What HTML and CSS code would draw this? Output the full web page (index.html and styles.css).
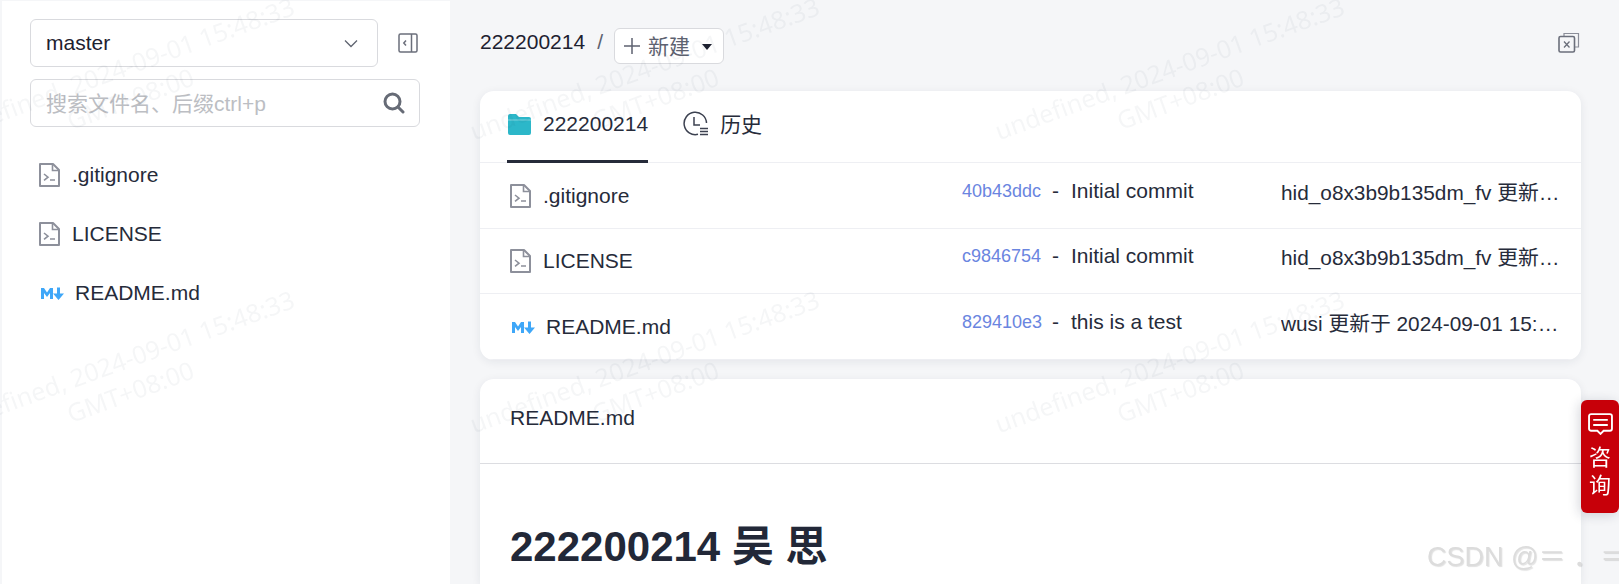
FILE: index.html
```html
<!DOCTYPE html>
<html lang="zh-CN">
<head>
<meta charset="utf-8">
<title>222200214</title>
<link rel="stylesheet" href="styles.css">
</head>
<body>
<svg class="defs" width="0" height="0" aria-hidden="true">
  <symbol id="i-file" viewBox="0 0 21 24">
    <path d="M1 1h13l6 6v16H1z" fill="none" stroke="#8d909b" stroke-width="2" stroke-linejoin="round"/>
    <path d="M13.500 1v6.500H20" fill="none" stroke="#8d909b" stroke-width="1.600"/>
    <path d="M5 11l4 3.200L5 17.400M11 17h5" fill="none" stroke="#8d909b" stroke-width="1.600"/>
  </symbol>
  <symbol id="i-md" viewBox="0 0 24 14">
    <path d="M1 13V2h3l3 4.500L10 2h3v11h-3V7L7 11 4 7v6z" fill="#3fa7f8"/>
    <path d="M17 1.500h3v6h4l-5.500 6.500L13 7.500h4z" fill="#3fa7f8"/>
  </symbol>
</svg>
<div class="app">
  <aside class="sidebar">
    <div class="branch-row">
      <div class="select">
        <span>master</span>
        <svg class="chev" width="14" height="9" viewBox="0 0 14 9"><path d="M1 1.500l6 6 6-6" fill="none" stroke="#5f6470" stroke-width="1.300"/></svg>
      </div>
      <svg class="collapse" width="20" height="20" viewBox="0 0 20 20">
        <rect x="1" y="1" width="18" height="18" rx="1.500" fill="none" stroke="#6b6f7b" stroke-width="1.500"/>
        <path d="M13.500 1v18" stroke="#6b6f7b" stroke-width="1.500"/>
        <path d="M8 7.500L5.800 10 8 12.500" fill="none" stroke="#6b6f7b" stroke-width="1.500"/>
      </svg>
    </div>
    <div class="search">
      <span class="placeholder">搜索文件名、后缀ctrl+p</span>
      <svg width="22" height="22" viewBox="0 0 22 22"><circle cx="9.500" cy="9.500" r="7.500" fill="none" stroke="#666b76" stroke-width="3"/><path d="M15 15l5 5" stroke="#666b76" stroke-width="3" stroke-linecap="round"/></svg>
    </div>
    <ul class="tree">
      <li class="tree-item"><svg class="file-icon"><use href="#i-file"/></svg><span>.gitignore</span></li>
      <li class="tree-item"><svg class="file-icon"><use href="#i-file"/></svg><span>LICENSE</span></li>
      <li class="tree-item"><svg class="md-icon"><use href="#i-md"/></svg><span>README.md</span></li>
    </ul>
  </aside>
  <main class="main">
    <div class="toolbar">
      <span class="crumb">222200214</span>
      <span class="slash">/</span>
      <div class="new-btn">
        <svg width="16" height="16" viewBox="0 0 16 16"><path d="M8 0v16M0 8h16" stroke="#5d6270" stroke-width="1.500"/></svg>
        <span>新建</span>
        <i class="caret"></i>
      </div>
      <svg class="copy" width="22" height="21" viewBox="0 0 22 21">
        <path d="M6 4V1.500h14.500V15H17" fill="none" stroke="#8b8e99" stroke-width="1.200"/>
        <rect x="1" y="4.500" width="15.500" height="15.500" rx="1.500" fill="none" stroke="#6b6f7b" stroke-width="1.600"/>
        <path d="M6 9.500l5.500 6M11.500 9.500l-5.500 6" stroke="#6b6f7b" stroke-width="1.300"/>
      </svg>
    </div>
    <section class="card files">
      <div class="tabs">
        <div class="tab active">
          <svg class="folder" width="23" height="21" viewBox="0 0 23 21"><path d="M0 2a2 2 0 0 1 2-2h6l3 3h10a2 2 0 0 1 2 2v14a2 2 0 0 1-2 2H2a2 2 0 0 1-2-2z" fill="#2cb7c9"/><path d="M0 6h23" stroke="#7fd3de" stroke-width="1"/></svg>
          <span>222200214</span>
        </div>
        <div class="tab">
          <svg width="25" height="25" viewBox="0 0 25 25">
            <path d="M15 23.300A11.200 11.200 0 1 1 23.500 12" fill="none" stroke="#3c4150" stroke-width="1.500"/>
            <path d="M11 6v8h6" fill="none" stroke="#3c4150" stroke-width="1.500"/>
            <path d="M17 17.500h8M17 20.500h8M17 23.500h8" stroke="#3c4150" stroke-width="1.500"/>
          </svg>
          <span class="tab-cjk">历史</span>
        </div>
      </div>
      <div class="row">
        <div class="name"><svg class="file-icon"><use href="#i-file"/></svg><span>.gitignore</span></div>
        <div class="commit"><a class="hash">40b43ddc</a><span class="dash">-</span><span>Initial commit</span></div>
        <div class="author">hid_o8x3b9b135dm_fv 更新于 2024-09-01 15:30</div>
      </div>
      <div class="row">
        <div class="name"><svg class="file-icon"><use href="#i-file"/></svg><span>LICENSE</span></div>
        <div class="commit"><a class="hash">c9846754</a><span class="dash">-</span><span>Initial commit</span></div>
        <div class="author">hid_o8x3b9b135dm_fv 更新于 2024-09-01 15:30</div>
      </div>
      <div class="row">
        <div class="name"><svg class="md-icon"><use href="#i-md"/></svg><span>README.md</span></div>
        <div class="commit"><a class="hash">829410e3</a><span class="dash">-</span><span>this is a test</span></div>
        <div class="author">wusi 更新于 2024-09-01 15:35:20</div>
      </div>
    </section>
    <section class="card readme">
      <div class="readme-head">README.md</div>
      <h1 class="title">222200214 吴 思</h1>
    </section>
  </main>
</div>
<div class="consult">
  <svg width="25" height="22" viewBox="0 0 24 21">
    <path d="M3 1h18a2 2 0 0 1 2 2v12a2 2 0 0 1-2 2h-6l-3 3-3-3H3a2 2 0 0 1-2-2V3a2 2 0 0 1 2-2z" fill="none" stroke="#fff" stroke-width="1.800"/>
    <path d="M5 6.500h14M5 11.500h14" stroke="#fff" stroke-width="1.800"/>
  </svg>
  <span>咨</span>
  <span>询</span>
</div>
<div class="csdn">CSDN @＝ ．＝</div>
<div class="watermarks" aria-hidden="true">
  <div class="wm"><span>undefined, 2024-09-01 15:48:33</span><span>GMT+08:00</span></div>
  <div class="wm"><span>undefined, 2024-09-01 15:48:33</span><span>GMT+08:00</span></div>
  <div class="wm"><span>undefined, 2024-09-01 15:48:33</span><span>GMT+08:00</span></div>
  <div class="wm"><span>undefined, 2024-09-01 15:48:33</span><span>GMT+08:00</span></div>
  <div class="wm"><span>undefined, 2024-09-01 15:48:33</span><span>GMT+08:00</span></div>
  <div class="wm"><span>undefined, 2024-09-01 15:48:33</span><span>GMT+08:00</span></div>
</div>
</body>
</html>
```
FILE: styles.css
```css
* { box-sizing: border-box; }
html, body { margin: 0; height: 100%; }
html { overflow: hidden; }
body {
  overflow: hidden;
  background: #f5f6f8;
  color: #262b3a;
  font-family: "Liberation Sans", "Noto Sans CJK SC", sans-serif;
  font-size: 21px;
  position: relative;
}
.defs { position: absolute; }
.app { display: flex; height: 100%; padding-top: 1px; padding-left: 2px; }

.sidebar {
  width: 448px;
  flex: none;
  background: #fff;
  padding: 18px 30px 0 28px;
}
.branch-row { display: flex; align-items: center; justify-content: space-between; }
.select {
  width: 348px;
  height: 48px;
  border: 1px solid #d9dade;
  border-radius: 6px;
  display: flex;
  align-items: center;
  justify-content: space-between;
  padding: 0 19px 0 15px;
  color: #1d2130;
}
.collapse { margin-right: 2px; }
.search {
  margin-top: 12px;
  height: 48px;
  border: 1px solid #d9dade;
  border-radius: 6px;
  display: flex;
  align-items: center;
  justify-content: space-between;
  padding: 0 14px 0 15px;
}
.placeholder { color: #bcbec3; margin-top: -2px; }
.tree { list-style: none; margin: 18px 0 0; padding: 0 0 0 9px; }
.tree-item { height: 59px; display: flex; align-items: center; }
.file-icon { width: 21px; height: 24px; flex: none; margin-right: 12px; }
.md-icon { width: 24px; height: 14px; flex: none; margin-right: 11px; margin-left: 1px; }

.main { flex: 1; min-width: 0; padding: 0 38px 0 30px; }
.toolbar { height: 90px; display: flex; align-items: center; padding-bottom: 4px; }
.crumb { color: #1d2130; margin-top: -4px; }
.slash { margin: -4px 11px 0 12px; color: #5d6270; }
.new-btn {
  width: 110px;
  height: 36px;
  margin-top: 3px;
  background: #fff;
  border: 1px solid #d9dade;
  border-radius: 6px;
  display: flex;
  align-items: center;
  padding-left: 9px;
  color: #5d6270;
}
.new-btn span { margin-left: 8px; margin-top: -2px; }
.caret {
  margin-left: 12px;
  border-left: 5px solid transparent;
  border-right: 5px solid transparent;
  border-top: 6px solid #1d2130;
  margin-top: 2px;
}
.copy { margin-left: auto; margin-right: 1px; margin-top: -4px; }

.card {
  background: #fff;
  border-radius: 14px;
  box-shadow: 0 2px 10px rgba(30, 35, 60, .08);
}
.files { height: 269px; overflow: hidden; }
.tabs {
  height: 72px;
  display: flex;
  padding-left: 27px;
  border-bottom: 1px solid #eeeff3;
}
.tab {
  height: 72px;
  display: flex;
  align-items: center;
  gap: 12px;
  padding-bottom: 4px;
  margin-right: 35px;
  border-bottom: 3px solid transparent;
}
.tab.active { border-bottom-color: #262b3a; }
.folder { margin-left: 1px; margin-top: 2px; }
.tab-cjk { margin-top: -2px; }
.row {
  height: 65px;
  display: grid;
  grid-template-columns: 482px 319px 1fr;
  align-items: center;
  border-bottom: 1px solid #eeeff3;
  padding-right: 19px;
}
.tabs + .row { height: 66px; }
.row:last-child { height: 66px; }
.name { display: flex; align-items: center; padding-left: 30px; }
.commit { display: flex; align-items: center; padding-bottom: 10px; }
.hash { color: #6a85e0; font-size: 18px; width: 90px; padding-top: 1px; }
.dash { width: 19px; }
.author {
  padding-bottom: 10px;
  font-size: 20.800px;
  white-space: nowrap;
  overflow: hidden;
  text-overflow: ellipsis;
}
.readme { margin-top: 19px; height: 205px; border-radius: 14px 14px 0 0; }
.readme-head {
  height: 85px;
  border-bottom: 1px solid #dcdde1;
  padding: 27px 30px 0;
}
.title {
  margin: 0;
  padding: 58px 30px 0;
  font-size: 42px;
  font-weight: 700;
  line-height: 50px;
  color: #222838;
}

.consult {
  position: fixed;
  right: 0;
  top: 400px;
  width: 38px;
  height: 113px;
  background: #c70009;
  border-radius: 6px;
  color: #fff;
  box-shadow: -2px 2px 12px rgba(30, 35, 60, .18);
  display: flex;
  flex-direction: column;
  align-items: center;
  padding-top: 13px;
  line-height: 28px;
  font-size: 22px;
}
.consult svg { margin-bottom: 9px; }
.csdn {
  position: fixed;
  left: 1427px;
  top: 541px;
  line-height: 32px;
  white-space: nowrap;
  font-size: 27px;
  color: #dcdcdc;
  text-shadow: 1px 1px 1px rgba(0, 0, 0, .12);
}
.watermarks {
  position: fixed;
  left: -138px;
  top: -64px;
  width: 1575px;
  height: 584px;
  display: grid;
  grid-template-columns: repeat(3, 525px);
  grid-auto-rows: 293px;
  pointer-events: none;
}
.wm {
  display: flex;
  flex-direction: column;
  align-items: center;
  justify-content: center;
  transform: rotate(-20deg);
  font-family: "Noto Sans", sans-serif;
  font-size: 25px;
  line-height: 32px;
  color: rgba(30, 35, 60, .045);
  white-space: nowrap;
}
```
